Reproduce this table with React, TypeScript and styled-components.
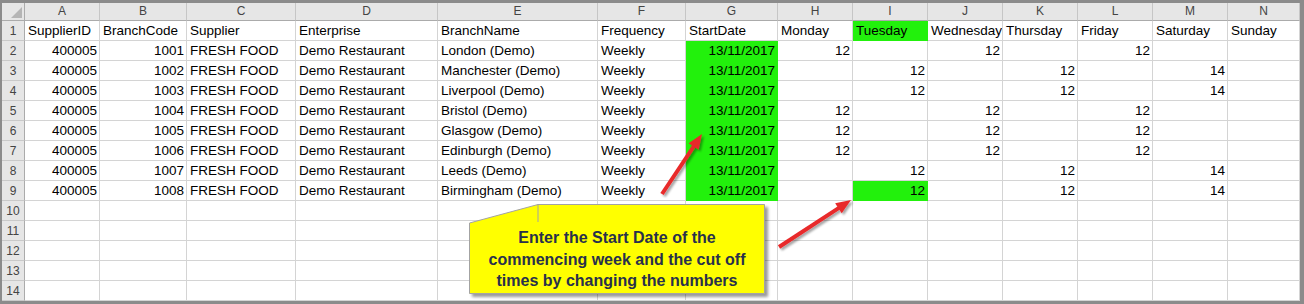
import React from 'react';
import styled, { createGlobalStyle } from 'styled-components';

const GREEN = '#22f10c';

const GlobalStyle = createGlobalStyle`
  html, body {
    margin: 0;
    padding: 0;
    background: #ffffff;
  }
  body {
    font-family: 'Liberation Sans', Arial, sans-serif;
  }
`;

const columns = [
  { letter: 'A', width: 75, align: 'right' },
  { letter: 'B', width: 87, align: 'right' },
  { letter: 'C', width: 109, align: 'left' },
  { letter: 'D', width: 142, align: 'left' },
  { letter: 'E', width: 160, align: 'left' },
  { letter: 'F', width: 88, align: 'left' },
  { letter: 'G', width: 92, align: 'right' },
  { letter: 'H', width: 75, align: 'right' },
  { letter: 'I', width: 75, align: 'right' },
  { letter: 'J', width: 75, align: 'right' },
  { letter: 'K', width: 75, align: 'right' },
  { letter: 'L', width: 75, align: 'right' },
  { letter: 'M', width: 75, align: 'right' },
  { letter: 'N', width: 72, align: 'right' },
];

const titles = [
  'SupplierID',
  'BranchCode',
  'Supplier',
  'Enterprise',
  'BranchName',
  'Frequency',
  'StartDate',
  'Monday',
  'Tuesday',
  'Wednesday',
  'Thursday',
  'Friday',
  'Saturday',
  'Sunday',
];

const branches = [
  { code: '1001', name: 'London (Demo)', days: ['12', '', '12', '', '12', '', ''] },
  { code: '1002', name: 'Manchester (Demo)', days: ['', '12', '', '12', '', '14', ''] },
  { code: '1003', name: 'Liverpool (Demo)', days: ['', '12', '', '12', '', '14', ''] },
  { code: '1004', name: 'Bristol (Demo)', days: ['12', '', '12', '', '12', '', ''] },
  { code: '1005', name: 'Glasgow (Demo)', days: ['12', '', '12', '', '12', '', ''] },
  { code: '1006', name: 'Edinburgh (Demo)', days: ['12', '', '12', '', '12', '', ''] },
  { code: '1007', name: 'Leeds (Demo)', days: ['', '12', '', '12', '', '14', ''] },
  { code: '1008', name: 'Birmingham (Demo)', days: ['', '12', '', '12', '', '14', ''] },
];

// green cells: "row:col" with col index into columns
const greenCells = new Set(['1:8', '9:8']);
for (let r = 2; r <= 9; r++) greenCells.add(`${r}:6`);

const Page = styled.div`
  position: relative;
  width: 1304px;
  height: 304px;
  overflow: hidden;
`;

const Frame = styled.div`
  box-sizing: border-box;
  width: 1304px;
  height: 304px;
  border-style: solid;
  border-color: #8b8b8b;
  border-width: 3px 4px 3px 2px;
  background: #ffffff;
  overflow: hidden;
`;

const Sheet = styled.div<{ $cols: string }>`
  display: grid;
  grid-template-columns: ${(p) => p.$cols};
  grid-template-rows: 18px repeat(14, 20px);
`;

const CornerCell = styled.div`
  box-sizing: border-box;
  background: #e6e6e6;
  border-right: 1px solid #ababab;
  border-bottom: 1px solid #ababab;
  display: flex;
  align-items: flex-end;
  justify-content: flex-end;
  padding: 0 2px 2px 0;
`;

const ColHeader = styled.div`
  box-sizing: border-box;
  background: #e6e6e6;
  border-right: 1px solid #c6c6c6;
  border-bottom: 1px solid #ababab;
  color: #444444;
  font-size: 12px;
  line-height: 17px;
  text-align: center;
`;

const RowHeader = styled.div`
  box-sizing: border-box;
  background: #e6e6e6;
  border-right: 1px solid #ababab;
  border-bottom: 1px solid #c9c9c9;
  color: #444444;
  font-size: 12px;
  line-height: 19px;
  padding-top: 1px;
  text-align: center;
`;

const Cell = styled.div<{ $align: string; $fill?: string }>`
  box-sizing: border-box;
  background: ${(p) => p.$fill || '#ffffff'};
  border-right: 1px solid ${(p) => p.$fill || '#d4d4d4'};
  border-bottom: 1px solid ${(p) => p.$fill || '#d4d4d4'};
  color: #000000;
  font-size: 13.5px;
  line-height: 18px;
  padding: 1px 2px 0 3px;
  text-align: ${(p) => p.$align};
  white-space: nowrap;
  overflow: hidden;
`;

const Overlay = styled.svg`
  position: absolute;
  left: 0;
  top: 0;
  pointer-events: none;
`;

const Callout = styled.div`
  position: absolute;
  left: 469px;
  top: 204px;
  width: 296px;
  height: 90px;
`;

const CalloutShape = styled.svg`
  position: absolute;
  left: 0;
  top: 0;
  overflow: visible;
`;

const CalloutText = styled.div`
  position: relative;
  padding-top: 23px;
  text-align: center;
  font-family: 'Liberation Sans', Arial, sans-serif;
  font-weight: bold;
  font-size: 16px;
  line-height: 21.5px;
  color: #28304c;
  white-space: nowrap;
`;

function Arrow({ x1, y1, x2, y2 }: { x1: number; y1: number; x2: number; y2: number }) {
  const dx = x2 - x1;
  const dy = y2 - y1;
  const len = Math.hypot(dx, dy);
  const ux = dx / len;
  const uy = dy / len;
  const head = 15;
  const half = 6;
  const bx = x2 - ux * head;
  const by = y2 - uy * head;
  const px = -uy;
  const py = ux;
  const pts = `${x2},${y2} ${bx + px * half},${by + py * half} ${bx - px * half},${by - py * half}`;
  return (
    <g filter="url(#arrowShadow)">
      <line x1={x1} y1={y1} x2={bx + ux * 2} y2={by + uy * 2} stroke="#e8292b" strokeWidth={4} />
      <polygon points={pts} fill="#e8292b" />
    </g>
  );
}

export default function App() {
  const template = ['23px', ...columns.map((c) => `${c.width}px`)].join(' ');

  const dataRows = branches.map((b) => [
    '400005',
    b.code,
    'FRESH FOOD',
    'Demo Restaurant',
    b.name,
    'Weekly',
    '13/11/2017',
    ...b.days,
  ]);

  return (
    <Page>
      <GlobalStyle />
      <Frame>
        <Sheet $cols={template}>
          <CornerCell>
            <svg width="11" height="11" viewBox="0 0 11 11">
              <polygon points="11,0 11,11 0,11" fill="#b5b5b5" />
            </svg>
          </CornerCell>
          {columns.map((c) => (
            <ColHeader key={c.letter}>{c.letter}</ColHeader>
          ))}

          <RowHeader>1</RowHeader>
          {titles.map((t, i) => (
            <Cell key={t} $align="left" $fill={greenCells.has(`1:${i}`) ? GREEN : undefined}>
              {t}
            </Cell>
          ))}

          {dataRows.map((row, r) => (
            <React.Fragment key={r}>
              <RowHeader>{r + 2}</RowHeader>
              {row.map((v, i) => (
                <Cell
                  key={i}
                  $align={columns[i].align}
                  $fill={greenCells.has(`${r + 2}:${i}`) ? GREEN : undefined}
                >
                  {v}
                </Cell>
              ))}
            </React.Fragment>
          ))}

          {[10, 11, 12, 13, 14].map((n) => (
            <React.Fragment key={n}>
              <RowHeader>{n}</RowHeader>
              {columns.map((c) => (
                <Cell key={c.letter} $align="left" />
              ))}
            </React.Fragment>
          ))}
        </Sheet>
      </Frame>

      <Overlay width="1304" height="304">
        <defs>
          <filter id="arrowShadow" x="-20%" y="-20%" width="140%" height="140%">
            <feDropShadow dx="2" dy="2" stdDeviation="1.2" floodColor="#000" floodOpacity="0.35" />
          </filter>
        </defs>
        <Arrow x1={662} y1={194} x2={702} y2={134} />
        <Arrow x1={779} y1={247} x2={851} y2={200} />
      </Overlay>

      <Callout>
        <CalloutShape width="296" height="90">
          <defs>
            <filter id="noteShadow" x="-10%" y="-10%" width="120%" height="130%">
              <feDropShadow dx="3" dy="3" stdDeviation="1.5" floodColor="#000" floodOpacity="0.4" />
            </filter>
          </defs>
          <polygon
            points="0.5,19 69,0.5 295.5,0.5 295.5,89.5 0.5,89.5"
            fill="#ffff00"
            stroke="#a3a3a3"
            strokeWidth="1"
            filter="url(#noteShadow)"
          />
          <line x1="69" y1="0.5" x2="69" y2="18" stroke="#a3a3a3" strokeWidth="1" />
        </CalloutShape>
        <CalloutText>
          Enter the Start Date of the
          <br />
          commencing week and the cut off
          <br />
          times by changing the numbers
        </CalloutText>
      </Callout>
    </Page>
  );
}
